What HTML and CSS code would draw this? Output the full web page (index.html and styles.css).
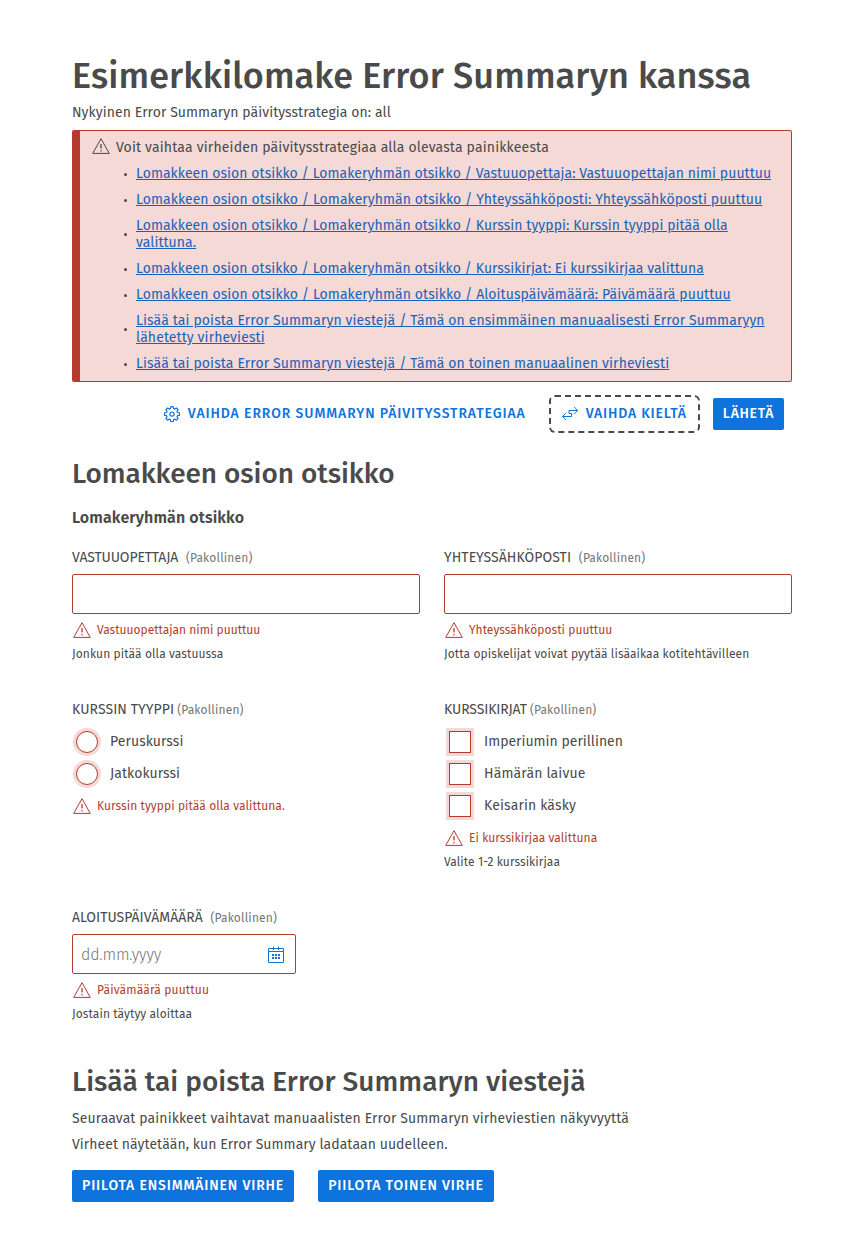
FILE: index.html
```html
<!DOCTYPE html>
<html lang="fi">
<head>
<meta charset="utf-8">
<title>Esimerkkilomake Error Summaryn kanssa</title>
<link rel="stylesheet" href="styles.css">
</head>
<body>
<svg class="defs" width="0" height="0">
  <symbol id="warn" viewBox="0 0 20 20"><path d="M10 2.700 L18.300 17.400 H1.700 Z" fill="none" stroke="currentColor" stroke-linejoin="round"/><path d="M10 8 V12.500" fill="none" stroke="currentColor" stroke-width="1.3"/><circle cx="10" cy="14.700" r=".8" fill="currentColor"/></symbol>
</svg>
<main class="page">
  <h1 class="title">Esimerkkilomake Error Summaryn kanssa</h1>
  <p class="text">Nykyinen Error Summaryn päivitysstrategia on: all</p>

  <section class="summary">
    <div class="summary-head"><svg class="icon"><use href="#warn"/></svg><span>Voit vaihtaa virheiden päivitysstrategiaa alla olevasta painikkeesta</span></div>
    <ul class="summary-list">
      <li class="tight"><a href="#">Lomakkeen osion otsikko / Lomakeryhmän otsikko / Vastuuopettaja: Vastuuopettajan nimi puuttuu</a></li>
      <li><a href="#">Lomakkeen osion otsikko / Lomakeryhmän otsikko / Yhteyssähköposti: Yhteyssähköposti puuttuu</a></li>
      <li class="tight"><a href="#">Lomakkeen osion otsikko / Lomakeryhmän otsikko / Kurssin tyyppi: Kurssin tyyppi pitää olla<br>valittuna.</a></li>
      <li class="tight"><a href="#">Lomakkeen osion otsikko / Lomakeryhmän otsikko / Kurssikirjat: Ei kurssikirjaa valittuna</a></li>
      <li><a href="#">Lomakkeen osion otsikko / Lomakeryhmän otsikko / Aloituspäivämäärä: Päivämäärä puuttuu</a></li>
      <li class="loose"><a href="#">Lisää tai poista Error Summaryn viestejä / Tämä on ensimmäinen manuaalisesti Error Summaryyn<br>lähetetty virheviesti</a></li>
      <li class="loose"><a href="#">Lisää tai poista Error Summaryn viestejä / Tämä on toinen manuaalinen virheviesti</a></li>
    </ul>
  </section>

  <div class="actions">
    <button class="btn link strategy"><svg class="btn-icon" viewBox="0 0 16 16"><path d="M6.8 .7h2.4l.4 1.9 1.1.5 1.7-1.1 1.7 1.7-1.1 1.7.5 1.1 1.9.4v2.4l-1.9.4-.5 1.1 1.1 1.7-1.7 1.7-1.7-1.1-1.1.5-.4 1.9H6.8l-.4-1.900-1.100-.5-1.700 1.100-1.700-1.700L3 10.800l-.5-1.100-1.900-.4V6.900l1.900-.4L3 5.400 1.900 3.700 3.600 2l1.700 1.100 1.100-.5z" fill="none" stroke="currentColor" stroke-width="1.2" stroke-linejoin="round"/><circle cx="8" cy="8.100" r="2.100" fill="none" stroke="currentColor" stroke-width="1.200"/></svg>VAIHDA ERROR SUMMARYN PÄIVITYSSTRATEGIAA</button>
    <button class="btn link focused"><svg class="btn-icon" viewBox="0 0 16 16"><path d="M12 .8 15.700 4.500 12 8.200M15.700 4.500H7V7.500H9.500V10.500H.4M4.100 6.800.4 10.500 4.100 14.200" fill="none" stroke="currentColor"/></svg>VAIHDA KIELTÄ</button>
    <button class="btn primary send">LÄHETÄ</button>
  </div>

  <h2 class="section-title">Lomakkeen osion otsikko</h2>
  <h3 class="group-title">Lomakeryhmän otsikko</h3>

  <div class="form">
    <div class="field">
      <div class="label"><span class="narrow">VASTUUOPETTAJA</span> <span class="req wide">(Pakollinen)</span></div>
      <input class="input" type="text">
      <div class="error flat"><svg class="icon"><use href="#warn"/></svg>Vastuuopettajan nimi puuttuu</div>
      <div class="help">Jonkun pitää olla vastuussa</div>
    </div>
    <div class="field">
      <div class="label">YHTEYSSÄHKÖPOSTI <span class="req wide">(Pakollinen)</span></div>
      <input class="input" type="text">
      <div class="error"><svg class="icon"><use href="#warn"/></svg>Yhteyssähköposti puuttuu</div>
      <div class="help">Jotta opiskelijat voivat pyytää lisäaikaa kotitehtävilleen</div>
    </div>
    <div class="field">
      <div class="label">KURSSIN TYYPPI<span class="req">(Pakollinen)</span></div>
      <div class="choices">
        <label class="choice radio"><span class="mark"></span><span class="choice-text">Peruskurssi</span></label>
        <label class="choice radio"><span class="mark"></span><span class="choice-text">Jatkokurssi</span></label>
      </div>
      <div class="error"><svg class="icon"><use href="#warn"/></svg>Kurssin tyyppi pitää olla valittuna.</div>
    </div>
    <div class="field">
      <div class="label"><span class="narrow">KURSSIKIRJAT</span><span class="req">(Pakollinen)</span></div>
      <div class="choices">
        <label class="choice check"><span class="mark"></span><span class="choice-text flat">Imperiumin perillinen</span></label>
        <label class="choice check"><span class="mark"></span><span class="choice-text wide-text">Hämärän laivue</span></label>
        <label class="choice check"><span class="mark"></span><span class="choice-text wide-text">Keisarin käsky</span></label>
      </div>
      <div class="error"><svg class="icon"><use href="#warn"/></svg>Ei kurssikirjaa valittuna</div>
      <div class="help">Valite 1-2 kurssikirjaa</div>
    </div>
    <div class="field">
      <div class="label"><span class="flat">ALOITUSPÄIVÄMÄÄRÄ</span> <span class="req wide">(Pakollinen)</span></div>
      <div class="input date"><span>dd.mm.yyyy</span><svg class="cal" viewBox="0 0 16 17"><path d="M.5 2.500H15.500V16.500H.5ZM.5 5.500H15.500M5.500 .5V4M10.500 .5V4" fill="none" stroke="currentColor"/><path d="M4 8h2v2H4zM7 8h2v2H7zM10 8h2v2h-2zM4 11h2v2H4zM7 11h2v2H7zM10 11h2v2h-2z" fill="currentColor"/></svg></div>
      <div class="error wide-text"><svg class="icon"><use href="#warn"/></svg>Päivämäärä puuttuu</div>
      <div class="help">Jostain täytyy aloittaa</div>
    </div>
  </div>

  <h2 class="section-title last">Lisää tai poista Error Summaryn viestejä</h2>
  <p class="text para loose">Seuraavat painikkeet vaihtavat manuaalisten Error Summaryn virheviestien näkyvyyttä</p>
  <p class="text para">Virheet näytetään, kun Error Summary ladataan uudelleen.</p>
  <div class="toggles">
    <button class="btn primary">PIILOTA ENSIMMÄINEN VIRHE</button>
    <button class="btn primary">PIILOTA TOINEN VIRHE</button>
  </div>
</main>
</body>
</html>
```
FILE: styles.css
```css
* { box-sizing: border-box; }
body { margin: 0; background: #fff; color: #4a4a4a; font: 14px/17px "Fira Sans", "Noto Sans", sans-serif; letter-spacing: 0.06px; }
h1, h2, h3, p, ul { margin: 0; padding: 0; }
.defs { display: block; height: 0; }
.page { width: 720px; margin-left: 72px; padding-top: 54px; }
.title { font-size: 36px; line-height: 44px; font-weight: 500; letter-spacing: 0.1px; }
.text { margin-top: 6px; }
.icon { width: 20px; height: 20px; flex: none; }
.tight { letter-spacing: 0.05px; }
.loose { letter-spacing: 0.1px; }
.flat { letter-spacing: 0; }
.narrow { letter-spacing: -0.14px; }
.wide-text { letter-spacing: 0.15px; }

.summary { margin-top: 9px; height: 252px; padding: 5px 10px 0 11px; background: #f4d9d6; border: 1px solid #b63b2e; border-left-width: 8px; border-radius: 2px; }
.summary-head { display: flex; align-items: center; gap: 5px; height: 20px; letter-spacing: 0.16px; }
.summary-head span { padding-top: 2px; }
.summary-list { display: flex; flex-direction: column; gap: 9px; margin-top: 9px; padding-left: 33px; list-style: none; }
.summary-list li { display: flex; align-items: center; gap: 9px; white-space: nowrap; }
.summary-list li::before { content: ""; width: 3px; height: 3px; margin-top: 1px; border-radius: 50%; background: #4a4a4a; flex: none; }
.summary-list a { color: #1a62b8; text-decoration: underline; }

.actions { display: flex; justify-content: flex-end; margin-top: 16px; padding-right: 8px; }
.btn { display: flex; align-items: center; gap: 8px; height: 32px; padding: 0 10px 2px; border: 0; border-radius: 2px; font: 500 14px/17px "Fira Sans", "Noto Sans", sans-serif; letter-spacing: 0.86px; white-space: nowrap; background: none; }
.link { color: #0f73dd; }
.primary { background: #0f73dd; color: #fff; }
.send { letter-spacing: 0.7px; }
.btn-icon { width: 16px; height: 16px; margin-top: 2px; }
.strategy { margin-right: 16px; letter-spacing: 0.9px; }
.focused { margin-right: 16px; letter-spacing: 0.8px; outline: 2px dashed #4a4a4a; outline-offset: 1px; border-radius: 3px; }

.section-title { margin-top: 27px; font-size: 28px; line-height: 34px; font-weight: 500; letter-spacing: -0.05px; }
.group-title { margin-top: 17px; font-size: 16px; line-height: 20px; font-weight: 600; letter-spacing: 0.1px; }
.form { display: grid; grid-template-columns: 348px 348px; gap: 38px 24px; margin-top: 20px; }
.label { height: 20px; line-height: 20px; white-space: nowrap; }
.req { margin-left: 3px; color: #767676; font-size: 12px; letter-spacing: 0.15px; }
.req.wide { margin-left: 4px; }
.input { display: block; width: 100%; height: 40px; margin-top: 6px; border: 1px solid #b63b2e; border-radius: 2px; background: #fff; }
.date { display: flex; align-items: center; justify-content: space-between; width: 224px; padding: 0 11px 0 8px; color: #767676; font-size: 16px; font-weight: 300; letter-spacing: -0.2px; }
.cal { width: 16px; height: 17px; margin-top: 1px; color: #0f73dd; }
.error { display: flex; align-items: center; gap: 5px; height: 20px; margin-top: 6px; color: #b63b2e; font-size: 12px; }
.help { height: 16px; margin-top: 6px; font-size: 12px; line-height: 16px; letter-spacing: 0.08px; }
.choices { margin-top: 6px; }
.choice { display: flex; align-items: center; height: 32px; }
.choice-text { padding-bottom: 2px; }
.mark { width: 22px; height: 22px; background: #fff; border: 1px solid #b63b2e; box-shadow: 0 0 0 3px #f4d9d6; flex: none; }
.radio .mark { margin: 0 12.5px 0 3.5px; border-radius: 50%; }
.check .mark { margin: 0 13px 0 5px; }
.last { margin-top: 43px; letter-spacing: 0.03px; }
.last + .para { margin-top: 11px; }
.para { margin-top: 9px; }
.toggles { display: flex; gap: 24px; margin-top: 17px; }
```
